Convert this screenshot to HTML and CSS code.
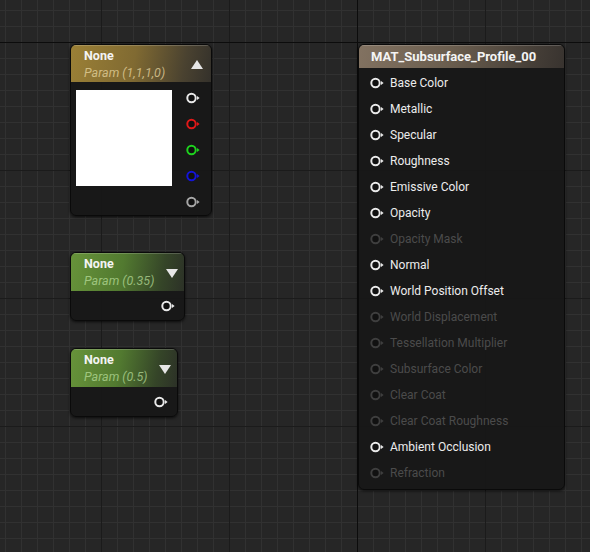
FILE: index.html
```html
<!DOCTYPE html>
<html lang="en">
<head>
    <meta charset="UTF-8">
    <meta name="viewport" content="width=device-width, initial-scale=1.0">
    <title>Material Graph</title>
    <link rel="stylesheet" href="styles.css">
</head>
<body>
    <!-- shared pin glyph: ring with a small arrow -->
    <svg width="0" height="0" class="defs">
        <symbol id="pin" viewBox="0 0 14 12">
            <circle cx="5.5" cy="6" r="4.2" fill="#111" stroke="currentColor" stroke-width="2"/>
            <path d="M11 4 L13.6 6 L11 8 Z" fill="currentColor"/>
        </symbol>
    </svg>

    <div class="graph">
        <div class="origin-x"></div>
        <div class="origin-y"></div>

        <!-- vector parameter -->
        <div class="node vector-node">
            <div class="node-header gold">
                <div class="titles">
                    <div class="node-title">None</div>
                    <div class="node-sub">Param (1,1,1,0)</div>
                </div>
                <span class="arrow up"></span>
            </div>
            <div class="vector-body">
                <div class="preview"></div>
                <div class="pin-col">
                    <svg class="pin white"><use href="#pin"/></svg>
                    <svg class="pin red"><use href="#pin"/></svg>
                    <svg class="pin green"><use href="#pin"/></svg>
                    <svg class="pin blue"><use href="#pin"/></svg>
                    <svg class="pin grey"><use href="#pin"/></svg>
                </div>
            </div>
        </div>

        <!-- scalar parameters -->
        <div class="node scalar-node first">
            <div class="node-header green">
                <div class="titles">
                    <div class="node-title">None</div>
                    <div class="node-sub">Param (0.35)</div>
                </div>
                <span class="arrow down"></span>
            </div>
            <div class="scalar-body">
                <svg class="pin white"><use href="#pin"/></svg>
            </div>
        </div>

        <div class="node scalar-node second">
            <div class="node-header green">
                <div class="titles">
                    <div class="node-title">None</div>
                    <div class="node-sub">Param (0.5)</div>
                </div>
                <span class="arrow down"></span>
            </div>
            <div class="scalar-body">
                <svg class="pin white"><use href="#pin"/></svg>
            </div>
        </div>

        <!-- material result node -->
        <div class="node material-node">
            <div class="node-header mat">
                <div class="node-title">MAT_Subsurface_Profile_00</div>
            </div>
            <ul class="inputs">
                <li><svg class="pin"><use href="#pin"/></svg>Base Color</li>
                <li><svg class="pin"><use href="#pin"/></svg>Metallic</li>
                <li><svg class="pin"><use href="#pin"/></svg>Specular</li>
                <li><svg class="pin"><use href="#pin"/></svg>Roughness</li>
                <li><svg class="pin"><use href="#pin"/></svg>Emissive Color</li>
                <li><svg class="pin"><use href="#pin"/></svg>Opacity</li>
                <li class="off"><svg class="pin"><use href="#pin"/></svg>Opacity Mask</li>
                <li><svg class="pin"><use href="#pin"/></svg>Normal</li>
                <li><svg class="pin"><use href="#pin"/></svg>World Position Offset</li>
                <li class="off"><svg class="pin"><use href="#pin"/></svg>World Displacement</li>
                <li class="off"><svg class="pin"><use href="#pin"/></svg>Tessellation Multiplier</li>
                <li class="off"><svg class="pin"><use href="#pin"/></svg>Subsurface Color</li>
                <li class="off"><svg class="pin"><use href="#pin"/></svg>Clear Coat</li>
                <li class="off"><svg class="pin"><use href="#pin"/></svg>Clear Coat Roughness</li>
                <li><svg class="pin"><use href="#pin"/></svg>Ambient Occlusion</li>
                <li class="off"><svg class="pin"><use href="#pin"/></svg>Refraction</li>
            </ul>
        </div>
    </div>
</body>
</html>
```

FILE: styles.css
```css
body {
    margin: 0;
    background: #262626;
    font-family: Roboto, "Liberation Sans", sans-serif;
    color: #e6e6e6;
}

.defs {
    position: absolute;
}

.graph {
    position: relative;
    width: 590px;
    height: 552px;
    overflow: hidden;
    background-color: #262626;
    background-image:
        linear-gradient(to right, #1b1b1b 1px, transparent 1px),
        linear-gradient(to bottom, #1b1b1b 1px, transparent 1px),
        linear-gradient(to right, #313131 1px, transparent 1px),
        linear-gradient(to bottom, #313131 1px, transparent 1px);
    background-size: 128px 128px, 128px 128px, 16px 16px, 16px 16px;
    background-position: 101px 0, 0 42px, 5px 0, 0 10px;
}

/* origin axes */
.origin-x {
    position: absolute;
    left: 0;
    right: 0;
    top: 42px;
    height: 1px;
    background: #0c0c0c;
}

.origin-y {
    position: absolute;
    top: 0;
    bottom: 0;
    left: 357px;
    width: 1px;
    background: #0c0c0c;
}

.node {
    position: absolute;
    box-sizing: border-box;
    background: rgba(24, 24, 24, 0.97);
    border: 1px solid #0a0a0a;
    border-radius: 6px;
    box-shadow: 0 1px 3px rgba(0, 0, 0, 0.7);
    overflow: hidden;
}

.node-header {
    display: flex;
    align-items: center;
    justify-content: space-between;
    box-shadow: inset 0 1px 0 rgba(255, 255, 255, 0.18);
}

.node-header.gold {
    height: 37px;
    padding: 2px 8px 0 13px;
    box-sizing: border-box;
    background: linear-gradient(100deg, #9b8036 0%, #806a32 45%, #4a4230 80%, #34312b 100%);
}

.node-header.green {
    height: 38px;
    padding: 2px 6px 0 13px;
    box-sizing: border-box;
    background: linear-gradient(100deg, #67933a 0%, #527a30 45%, #354528 80%, #2c3127 100%);
}

.node-header.mat {
    height: 23px;
    padding: 1px 12px 0;
    box-sizing: border-box;
    background: linear-gradient(100deg, #827261 0%, #6a5d4e 45%, #453e37 85%, #38332f 100%);
}

.node-title {
    font-size: 12.5px;
    font-weight: bold;
    color: #f4f4f4;
    line-height: 16px;
}

.mat .node-title {
    font-size: 13px;
}

.node-sub {
    font-size: 12.5px;
    font-style: italic;
    line-height: 18px;
}

.gold .node-sub {
    color: rgba(232, 214, 160, 0.75);
}

.green .node-sub {
    color: rgba(190, 225, 160, 0.7);
}

.arrow {
    width: 0;
    height: 0;
    border-left: 6px solid transparent;
    border-right: 6px solid transparent;
}

.arrow.up {
    border-bottom: 9px solid #e6e6e6;
}

.arrow.down {
    border-top: 9px solid #e6e6e6;
}

.pin {
    width: 14px;
    height: 12px;
    flex: none;
}

.pin.white { color: #e8e8e8; }
.pin.red { color: #e01818; }
.pin.green { color: #1ed21e; }
.pin.blue { color: #1414d8; }
.pin.grey { color: #a6a6a6; }

/* vector parameter */
.vector-node {
    left: 70px;
    top: 44px;
    width: 142px;
    height: 172px;
}

.vector-body {
    display: flex;
    padding: 8px 0 0 5px;
}

.preview {
    width: 96px;
    height: 96px;
    background: #fff;
}

.pin-col {
    display: flex;
    flex-direction: column;
    gap: 14px;
    margin-left: 14px;
    padding-top: 2px;
}

/* scalar parameters */
.scalar-node {
    height: 69px;
}

.scalar-node.first {
    left: 70px;
    top: 252px;
    width: 115px;
}

.scalar-node.second {
    left: 70px;
    top: 348px;
    width: 108px;
}

.scalar-body {
    display: flex;
    justify-content: flex-end;
    padding: 9px 9px 0 0;
}

/* material result */
.material-node {
    left: 358px;
    top: 44px;
    width: 207px;
    height: 446px;
}

.inputs {
    list-style: none;
    margin: 0;
    padding: 2px 0 0 11px;
}

.inputs li {
    display: flex;
    align-items: center;
    gap: 6px;
    height: 26px;
    font-size: 12px;
    color: #ececec;
}

.inputs li .pin {
    color: #e8e8e8;
}

.inputs li.off {
    color: #4b4b4b;
}

.inputs li.off .pin {
    color: #3e3e3e;
}
```
